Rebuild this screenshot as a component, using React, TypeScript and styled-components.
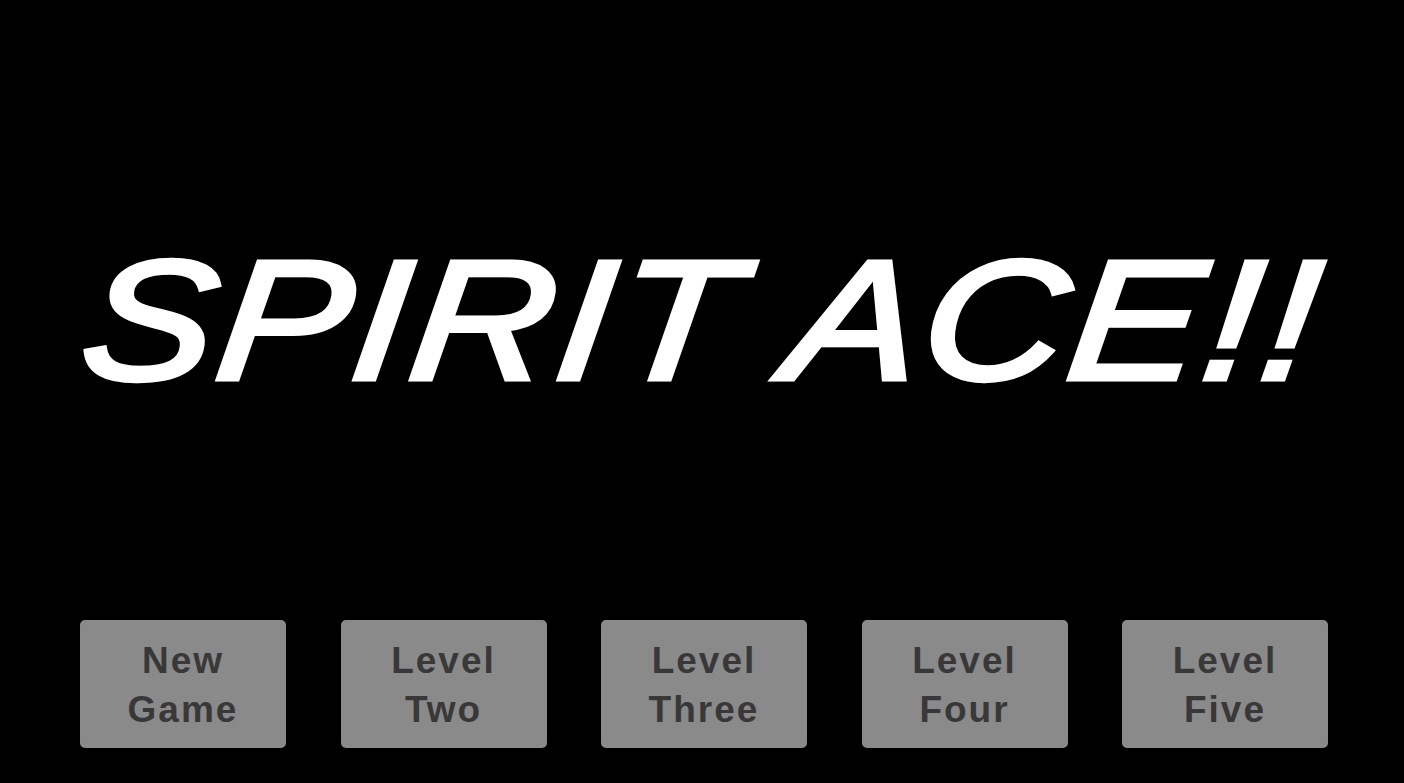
import * as React from 'react'
import styled, { createGlobalStyle } from 'styled-components'

const GlobalStyle = createGlobalStyle`
  html, body {
    margin: 0;
    padding: 0;
    background: #000000;
    overflow: hidden;
  }
`

const Screen = styled.div`
  width: 1404px;
  height: 783px;
  background: #000000;
  display: flex;
  flex-direction: column;
  align-items: center;
`

const TitleArea = styled.div`
  height: 600px;
  width: 100%;
  display: flex;
  align-items: center;
  justify-content: center;
  padding-top: 40px;
  padding-left: 2px;
  box-sizing: border-box;
`

const Title = styled.h1`
  margin: 0;
  color: #ffffff;
  -webkit-text-stroke: 5px #ffffff;
  font-family: 'Liberation Sans', Arial, sans-serif;
  font-style: italic;
  font-weight: 400;
  font-size: 170px;
  line-height: 1;
  white-space: nowrap;
  letter-spacing: 3px;
  word-spacing: -2px;
  transform: scaleX(1.16) skewX(-6deg);
`

const ButtonRow = styled.div`
  display: flex;
  gap: 54.5px;
  padding-top: 20px;
  padding-left: 4px;
`

const MenuButton = styled.button`
  width: 206px;
  height: 128px;
  border: none;
  border-radius: 5px;
  background: #8a8a8a;
  color: #383838;
  font-family: 'Liberation Sans', Arial, sans-serif;
  font-weight: 700;
  font-size: 37px;
  line-height: 49px;
  letter-spacing: 2px;
  padding: 2px 0 0 0;
  cursor: pointer;
`

const levels = ['New Game', 'Level Two', 'Level Three', 'Level Four', 'Level Five']

export default function App() {
  return (
    <>
      <GlobalStyle />
      <Screen>
        <TitleArea>
          <Title>SPIRIT ACE!!</Title>
        </TitleArea>
        <ButtonRow>
          {levels.map((label) => {
            const [a, b] = label.split(' ')
            return (
              <MenuButton key={label}>
                {a}
                <br />
                {b}
              </MenuButton>
            )
          })}
        </ButtonRow>
      </Screen>
    </>
  )
}
